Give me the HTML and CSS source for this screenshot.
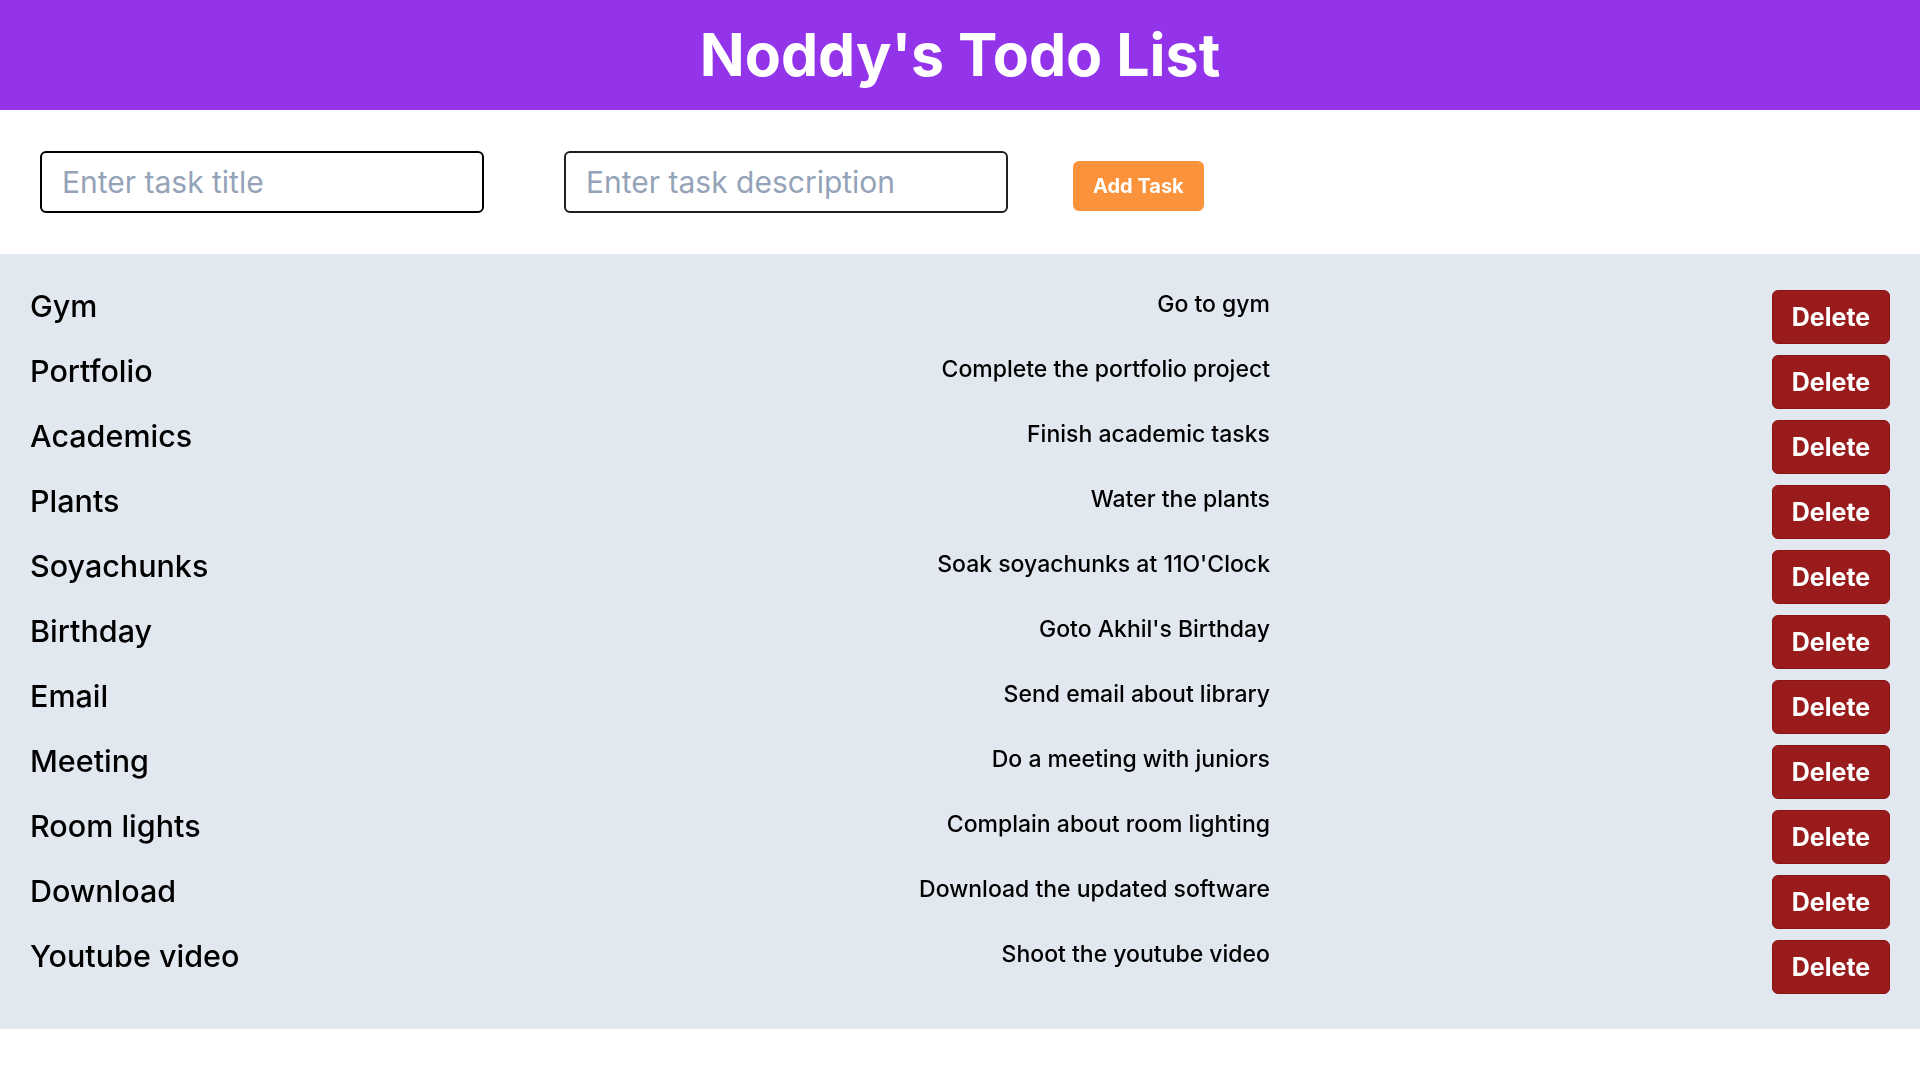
FILE: index.html
```html
<!DOCTYPE html>
<html lang="en">
<head>
<meta charset="utf-8">
<title>Noddy's Todo List</title>
<link rel="stylesheet" href="styles.css">
</head>
<body>
<header class="header">
  <h1 class="header-title">Noddy's Todo List</h1>
</header>
<section class="form">
  <input class="field field-title" type="text" placeholder="Enter task title" autofocus>
  <input class="field field-desc" type="text" placeholder="Enter task description">
  <button class="add-btn">Add Task</button>
</section>
<main class="list">
  <div class="row"><div class="row-title">Gym</div><div class="row-desc">Go to gym</div><button class="del-btn">Delete</button></div>
  <div class="row"><div class="row-title">Portfolio</div><div class="row-desc">Complete the portfolio project</div><button class="del-btn">Delete</button></div>
  <div class="row"><div class="row-title">Academics</div><div class="row-desc">Finish academic tasks</div><button class="del-btn">Delete</button></div>
  <div class="row"><div class="row-title">Plants</div><div class="row-desc">Water the plants</div><button class="del-btn">Delete</button></div>
  <div class="row"><div class="row-title">Soyachunks</div><div class="row-desc">Soak soyachunks at 11O'Clock</div><button class="del-btn">Delete</button></div>
  <div class="row"><div class="row-title">Birthday</div><div class="row-desc">Goto Akhil's Birthday</div><button class="del-btn">Delete</button></div>
  <div class="row"><div class="row-title">Email</div><div class="row-desc">Send email about library</div><button class="del-btn">Delete</button></div>
  <div class="row"><div class="row-title">Meeting</div><div class="row-desc">Do a meeting with juniors</div><button class="del-btn">Delete</button></div>
  <div class="row"><div class="row-title">Room lights</div><div class="row-desc">Complain about room lighting</div><button class="del-btn">Delete</button></div>
  <div class="row"><div class="row-title">Download</div><div class="row-desc">Download the updated software</div><button class="del-btn">Delete</button></div>
  <div class="row"><div class="row-title">Youtube video</div><div class="row-desc">Shoot the youtube video</div><button class="del-btn">Delete</button></div>
</main>
</body>
</html>
```
FILE: styles.css
```css
* { box-sizing: border-box; }
html, body { margin: 0; padding: 0; background: #ffffff; }
body { font-family: Inter, "Noto Sans", sans-serif; color: #000; }

.header {
  background: #9333ea;
  height: 110px;
  display: flex;
  align-items: center;
  justify-content: center;
}
.header-title {
  margin: 0;
  color: #fff;
  font-size: 59px;
  line-height: 60px;
  font-weight: 700;
}

.form {
  display: flex;
  align-items: flex-start;
  padding: 41px 0 41px 40px;
  height: 144px;
}
.field {
  width: 444px;
  height: 62px;
  border: 2px solid #1f1f1f;
  border-radius: 6px;
  padding: 0 20px 0 20px;
  font-family: Inter, "Noto Sans", sans-serif;
  font-size: 30px;
  color: #000;
  background: #fff;
  outline: none;
  caret-color: #000;
}
.field::placeholder { color: #94a3b8; }
.field:focus { border-color: #000; }
.field-title { margin-right: 80px; }
.field-desc { margin-right: 65px; }
.add-btn {
  margin-top: 10px;
  height: 50px;
  padding: 0 20px;
  border: none;
  border-radius: 6px;
  background: #fb923c;
  color: #fff;
  font-family: Inter, "Noto Sans", sans-serif;
  font-size: 20px;
  font-weight: 700;
  line-height: 28px;
}

.list {
  background: #e2e8f0;
  padding: 34px 30px 35px;
  display: grid;
  row-gap: 9px;
}
.row {
  display: grid;
  grid-template-columns: 1fr 1fr 1fr;
  align-items: start;
}
.row-title {
  font-size: 30.5px;
  line-height: 36px;
  font-weight: 500;
}
.row-desc {
  font-size: 23px;
  line-height: 32px;
  font-weight: 500;
  text-align: right;
}
.del-btn {
  justify-self: end;
  margin-top: 2px;
  height: 54px;
  width: 118px;
  padding: 0;
  background: #991b1b;
  border: 1px solid #8a1414;
  border-radius: 6px;
  color: #fff;
  font-family: Inter, "Noto Sans", sans-serif;
  font-size: 25px;
  font-weight: 700;
  line-height: 32px;
}
```
